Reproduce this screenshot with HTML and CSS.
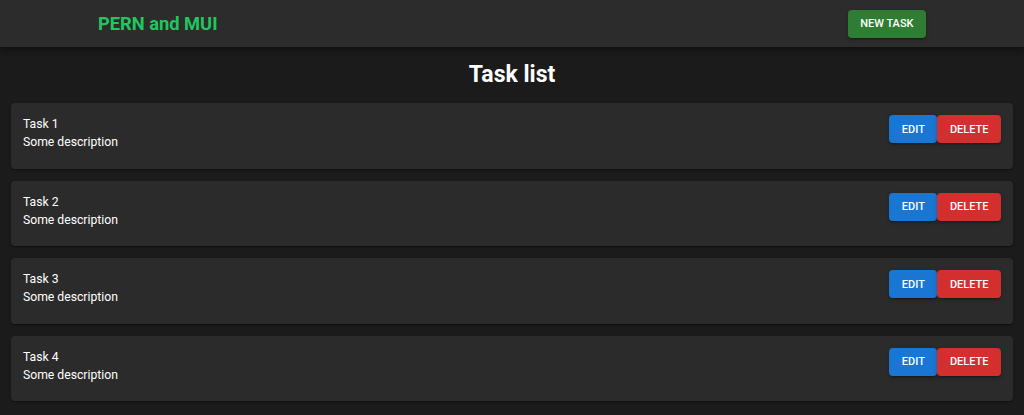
FILE: index.html
```html
<!DOCTYPE html>
<html>
<head>
<meta charset="utf-8">
<link rel="stylesheet" href="styles.css">
</head>
<body>
<header class="appbar">
  <div class="brand">PERN and MUI</div>
  <button class="btn btn-green">NEW TASK</button>
</header>
<main class="main">
  <h1 class="page-title">Task list</h1>
  <div class="list">
    <div class="card">
      <div class="card-text"><div>Task 1</div><div>Some description</div></div>
      <div class="actions"><button class="btn btn-blue">EDIT</button><button class="btn btn-red">DELETE</button></div>
    </div>
    <div class="card">
      <div class="card-text"><div>Task 2</div><div>Some description</div></div>
      <div class="actions"><button class="btn btn-blue">EDIT</button><button class="btn btn-red">DELETE</button></div>
    </div>
    <div class="card">
      <div class="card-text"><div>Task 3</div><div>Some description</div></div>
      <div class="actions"><button class="btn btn-blue">EDIT</button><button class="btn btn-red">DELETE</button></div>
    </div>
    <div class="card">
      <div class="card-text"><div>Task 4</div><div>Some description</div></div>
      <div class="actions"><button class="btn btn-blue">EDIT</button><button class="btn btn-red">DELETE</button></div>
    </div>
  </div>
</main>
</body>
</html>
```

FILE: styles.css
```css
* { box-sizing: border-box; }
html, body { margin: 0; padding: 0; }
body {
  background: #1b1b1b;
  color: #fff;
  font-family: Roboto, "Liberation Sans", sans-serif;
  height: 415px;
  overflow: hidden;
}
.appbar {
  height: 47px;
  background: #2c2c2c;
  display: flex;
  align-items: center;
  justify-content: space-between;
  padding: 0 98px;
  box-shadow: 0 2px 4px -1px rgba(0,0,0,0.2), 0 4px 5px 0 rgba(0,0,0,0.14), 0 1px 10px 0 rgba(0,0,0,0.12);
  position: relative;
  z-index: 1;
}
.brand {
  color: #22c55e;
  font-size: 18.3px;
  font-weight: 700;
}
.btn {
  border: none;
  color: #fff;
  font-family: Roboto, "Liberation Sans", sans-serif;
  font-size: 11px;
  font-weight: 500;
  height: 28px;
  padding: 0 12.5px;
  border-radius: 4px;
  cursor: pointer;
  box-shadow: 0 3px 1px -2px rgba(0,0,0,0.2), 0 2px 2px 0 rgba(0,0,0,0.14), 0 1px 5px 0 rgba(0,0,0,0.12);
}
.btn-green { background: #2e7d32; }
.btn-blue { background: #1976d2; }
.btn-red { background: #d32f2f; }
.main { padding: 0 11px; }
.page-title {
  margin: 12px 0;
  text-align: center;
  font-size: 23px;
  line-height: 32px;
  font-weight: 700;
}
.list {
  display: flex;
  flex-direction: column;
  gap: 12px;
}
.card {
  background: #2b2b2b;
  border-radius: 4px;
  display: flex;
  justify-content: space-between;
  align-items: flex-start;
  padding: 12px 12px 17.5px;
  box-shadow: 0 2px 1px -1px rgba(0,0,0,0.2), 0 1px 1px 0 rgba(0,0,0,0.14), 0 1px 3px 0 rgba(0,0,0,0.12);
}
.card-text {
  font-size: 12.2px;
  line-height: 18px;
}
.actions { display: flex; }
```
